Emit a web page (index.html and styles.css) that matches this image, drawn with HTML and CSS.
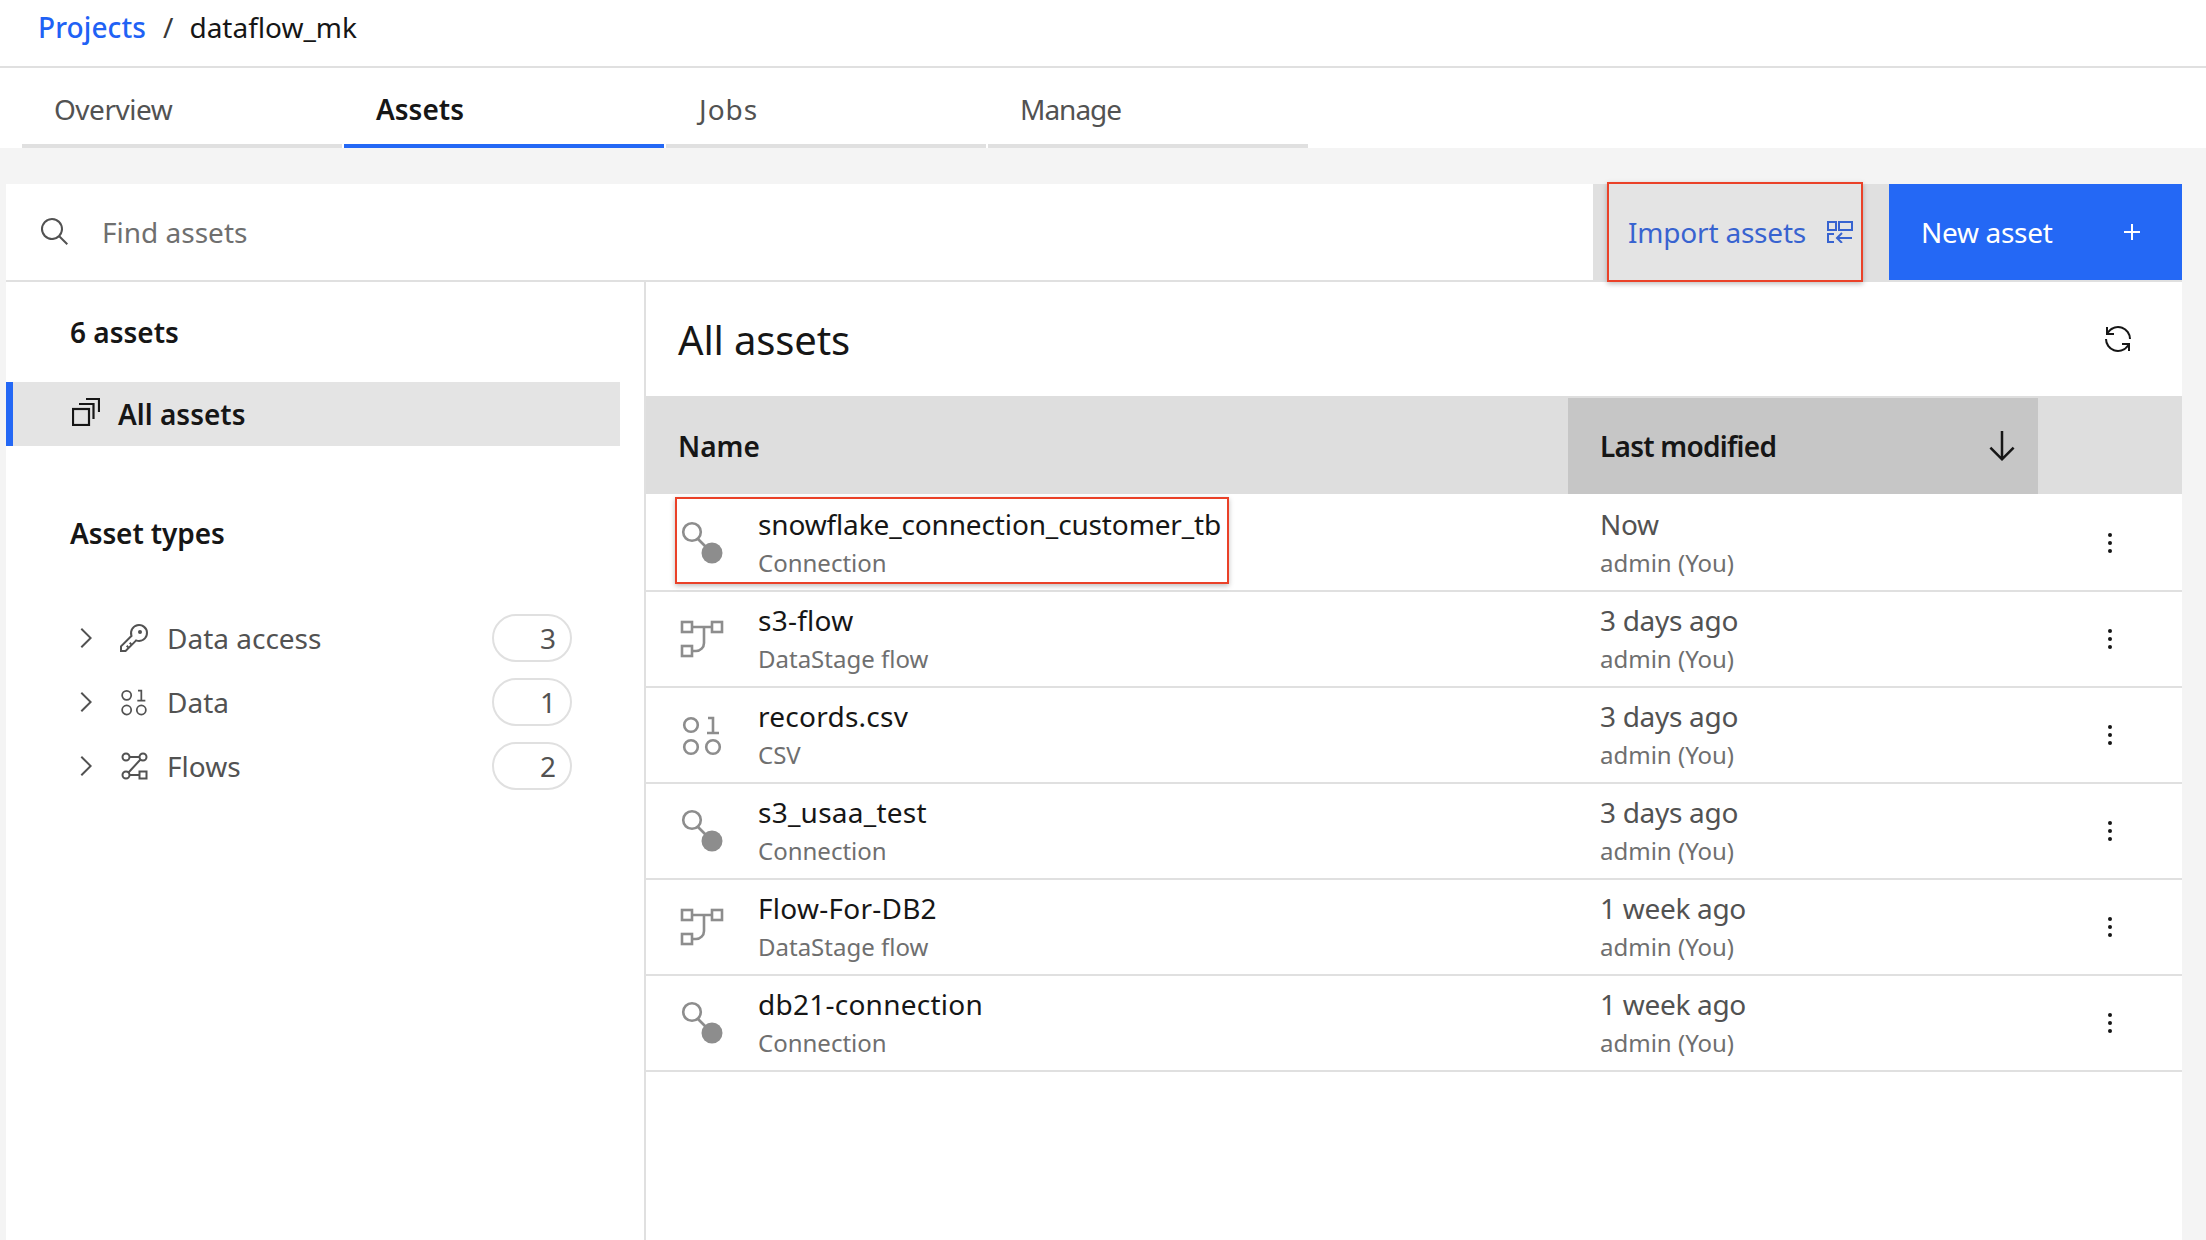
FILE: index.html
```html
<!DOCTYPE html>
<html lang="en">
<head>
<meta charset="utf-8">
<title>dataflow_mk</title>
<link rel="stylesheet" href="styles.css">
</head>
<body>
<svg class="sprite" aria-hidden="true">
  <symbol id="i-conn" viewBox="0 0 48 48">
    <circle cx="14" cy="13" r="8.8" fill="none" stroke="currentColor" stroke-width="2.6"/>
    <path d="M20 20l8 8" stroke="currentColor" stroke-width="2.6"/>
    <circle cx="34" cy="34" r="10.5" fill="currentColor"/>
  </symbol>
  <symbol id="i-flow" viewBox="0 0 48 48">
    <g fill="none" stroke="currentColor" stroke-width="2.6">
      <rect x="4" y="7" width="10" height="10"/>
      <rect x="34" y="7" width="10" height="10"/>
      <rect x="4" y="31" width="10" height="10"/>
      <path d="M14 12h20M26 12v16a8 8 0 0 1-8 8h-4"/>
    </g>
  </symbol>
  <symbol id="i-data" viewBox="0 0 48 48">
    <g fill="none" stroke="currentColor" stroke-width="2.6">
      <circle cx="13" cy="14" r="6.8"/>
      <circle cx="13" cy="36" r="6.8"/>
      <circle cx="35" cy="36" r="6.8"/>
      <path d="M29 22h12M35 21V7h-5"/>
    </g>
  </symbol>
  <symbol id="i-more" viewBox="0 0 32 32">
    <circle cx="16" cy="8" r="2"/><circle cx="16" cy="16" r="2"/><circle cx="16" cy="24" r="2"/>
  </symbol>
  <symbol id="i-chev" viewBox="0 0 32 32">
    <path d="M22 16L12 26l-1.4-1.4 8.6-8.6-8.6-8.6L12 6z"/>
  </symbol>
</svg>

<header class="crumbs">
  <a class="crumb-link">Projects</a>
  <span class="crumb-sep">/</span>
  <span class="crumb-current">dataflow_mk</span>
</header>

<nav class="tabs">
  <div class="tab tab-overview">Overview</div>
  <div class="tab tab-active">Assets</div>
  <div class="tab tab-jobs">Jobs</div>
  <div class="tab tab-manage">Manage</div>
</nav>

<main class="shell">
  <div class="toolbar">
    <div class="search">
      <svg class="icon-search" viewBox="0 0 32 32"><path d="M29 27.586l-7.552-7.552a11.018 11.018 0 1 0-1.414 1.414L27.586 29zM4 13a9 9 0 1 1 9 9 9.01 9.01 0 0 1-9-9z"/></svg>
      <span class="search-ph">Find assets</span>
    </div>
    <div class="btn btn-import">
      <span>Import assets</span>
      <svg class="icon-import" viewBox="0 0 26 22" fill="none" stroke="currentColor" stroke-width="2"><rect x="1" y="1" width="8" height="8"/><rect x="12" y="1" width="13" height="8"/><path d="M7 13H1v8h6M25 17H10M15 12l-5 5 5 5"/></svg>
    </div>
    <div class="btn btn-new">
      <span>New asset</span>
      <svg class="icon-add" viewBox="0 0 32 32"><path d="M17 15V8h-2v7H8v2h7v7h2v-7h7v-2z"/></svg>
    </div>
  </div>

  <div class="body">
    <aside class="side">
      <div class="side-count">6 assets</div>
      <div class="side-all">
        <svg class="icon-all" viewBox="0 0 28 28" fill="none" stroke="currentColor" stroke-width="2.2"><rect x="1" y="11" width="16" height="16"/><path d="M7 6h14.500v15M14 1h13v13"/></svg>
        <span>All assets</span>
      </div>
      <div class="side-head">Asset types</div>
      <ul class="types">
        <li class="type">
          <svg class="chev"><use href="#i-chev"/></svg>
          <svg class="type-icon" viewBox="0 0 32 32"><path d="M21,2a8.9977,8.9977,0,0,0-8.6119,11.6118L2,24v6H8L18.3881,19.6118A9,9,0,1,0,21,2Zm0,16a7.0125,7.0125,0,0,1-2.0322-.3022L17.821,17.35l-.8472.8472-3.1811,3.1812L12.4141,20,11,21.4141l1.3787,1.3786-1.5859,1.586L9.4141,23,8,24.4141l1.3787,1.3786L7.1716,28H4V24.8284l9.8023-9.8023.8472-.8474-.3473-1.1467A7,7,0,1,1,21,18Z"/><circle cx="22" cy="10" r="2"/></svg>
          <span class="type-label">Data access</span>
          <span class="pill">3</span>
        </li>
        <li class="type">
          <svg class="chev"><use href="#i-chev"/></svg>
          <svg class="type-icon type-line"><use href="#i-data"/></svg>
          <span class="type-label">Data</span>
          <span class="pill">1</span>
        </li>
        <li class="type">
          <svg class="chev"><use href="#i-chev"/></svg>
          <svg class="type-icon type-line" viewBox="0 0 32 32" stroke="currentColor" stroke-width="2"><circle cx="8" cy="7" r="3.500"/><circle cx="25" cy="7" r="3.500"/><circle cx="8" cy="25" r="3.500"/><rect x="21.500" y="21.500" width="7" height="7"/><path d="M11.500 7h10M11.500 25h10M22.500 9.500L10.500 22.500"/></svg>
          <span class="type-label">Flows</span>
          <span class="pill">2</span>
        </li>
      </ul>
    </aside>

    <section class="panel">
      <div class="panel-head">
        <h1 class="panel-title">All assets</h1>
        <svg class="icon-renew" viewBox="0 0 32 32"><path d="M12 10H6.780A11 11 0 0 1 27 16h2A13 13 0 0 0 6 7.680V4H4v8h8zm8 12h5.220A11 11 0 0 1 5 16H3a13 13 0 0 0 23 8.320V28h2v-8h-8z"/></svg>
      </div>
      <div class="thead">
        <div class="th th-name">Name</div>
        <div class="th th-sort">
          <span class="th-sort-label">Last modified</span>
          <svg class="icon-arrow" viewBox="0 0 32 32"><path d="M24.590 16.590L17 24.170V4h-2v20.170l-7.590-7.580L6 18l10 10 10-10-1.410-1.410z"/></svg>
        </div>
        <div class="th"></div>
      </div>

      <div class="row">
        <div class="cell-name"><svg class="asset-icon"><use href="#i-conn"/></svg><div><div class="title title-long">snowflake_connection_customer_tb</div><div class="sub">Connection</div></div></div>
        <div><div class="when">Now</div><div class="sub">admin (You)</div></div>
        <svg class="more"><use href="#i-more"/></svg>
      </div>
      <div class="row">
        <div class="cell-name"><svg class="asset-icon"><use href="#i-flow"/></svg><div><div class="title">s3-flow</div><div class="sub">DataStage flow</div></div></div>
        <div><div class="when">3 days ago</div><div class="sub">admin (You)</div></div>
        <svg class="more"><use href="#i-more"/></svg>
      </div>
      <div class="row">
        <div class="cell-name"><svg class="asset-icon"><use href="#i-data"/></svg><div><div class="title">records.csv</div><div class="sub">CSV</div></div></div>
        <div><div class="when">3 days ago</div><div class="sub">admin (You)</div></div>
        <svg class="more"><use href="#i-more"/></svg>
      </div>
      <div class="row">
        <div class="cell-name"><svg class="asset-icon"><use href="#i-conn"/></svg><div><div class="title">s3_usaa_test</div><div class="sub">Connection</div></div></div>
        <div><div class="when">3 days ago</div><div class="sub">admin (You)</div></div>
        <svg class="more"><use href="#i-more"/></svg>
      </div>
      <div class="row">
        <div class="cell-name"><svg class="asset-icon"><use href="#i-flow"/></svg><div><div class="title">Flow-For-DB2</div><div class="sub">DataStage flow</div></div></div>
        <div><div class="when">1 week ago</div><div class="sub">admin (You)</div></div>
        <svg class="more"><use href="#i-more"/></svg>
      </div>
      <div class="row">
        <div class="cell-name"><svg class="asset-icon"><use href="#i-conn"/></svg><div><div class="title">db21-connection</div><div class="sub">Connection</div></div></div>
        <div><div class="when">1 week ago</div><div class="sub">admin (You)</div></div>
        <svg class="more"><use href="#i-more"/></svg>
      </div>
    </section>
  </div>
</main>

<div class="mark mark-import"></div>
<div class="mark mark-row"></div>
</body>
</html>
```

FILE: styles.css
```css
* { box-sizing: border-box; }
html, body { margin: 0; padding: 0; }
body {
  position: relative;
  width: 2206px;
  height: 1240px;
  overflow: hidden;
  background: #f4f4f4;
  color: #161616;
  font-family: "Noto Sans", "Open Sans", sans-serif;
  font-size: 28px;
}
.sprite { display: none; }

.crumbs {
  height: 68px;
  background: #fff;
  border-bottom: 2px solid #e0e0e0;
  padding: 0 0 12px 38px;
  display: flex;
  align-items: center;
  line-height: 38px;
}
.crumb-link { color: #1f62f5; font-weight: 500; letter-spacing: 0.1px; }
.crumb-sep { margin: 0 16px 0 17px; color: #393939; }

.tabs {
  height: 80px;
  background: #fff;
  padding-left: 22px;
  display: flex;
  gap: 2px;
}
.tab {
  width: 320px;
  border-bottom: 4px solid #e0e0e0;
  padding: 22px 0 0 32px;
  line-height: 38px;
  color: #525252;
}
.tab-overview { letter-spacing: -0.5px; }
.tab-jobs { letter-spacing: 1px; padding-left: 33px; }
.tab-manage { letter-spacing: -1px; }
.tab-active {
  border-bottom-color: #2468f5;
  color: #161616;
  font-weight: 600;
}

.shell {
  margin: 36px 24px 0 6px;
  background: #fff;
  height: 1056px;
}

.toolbar {
  display: flex;
  height: 98px;
  border-bottom: 2px solid #e0e0e0;
}
.search {
  width: 1587px;
  display: flex;
  align-items: center;
  padding-left: 33px;
}
.icon-search { width: 32px; height: 32px; fill: #525252; }
.search-ph { margin-left: 31px; color: #6f6f6f; }
.btn {
  height: 96px;
  display: flex;
  align-items: center;
}
.btn-import {
  width: 296px;
  padding: 0 0 0 35px;
  background: #e0e0e0;
  color: #1448c8;
  letter-spacing: -0.2px;
}
.icon-import { width: 26px; height: 22px; margin-left: 21px; }
.btn-new {
  width: 293px;
  padding-left: 32px;
  background: #2468f5;
  color: #fff;
  letter-spacing: -0.3px;
}
.icon-add { width: 32px; height: 32px; fill: #fff; margin-left: 63px; }

.body { display: flex; height: 958px; }
.side {
  width: 640px;
  border-right: 2px solid #e0e0e0;
}
.side-count {
  margin: 31px 0 0 64px;
  height: 38px;
  line-height: 38px;
  font-weight: 600;
}
.side-all {
  margin-top: 31px;
  width: 614px;
  height: 64px;
  background: #e4e4e4;
  border-left: 7px solid #2468f5;
  padding-left: 59px;
  display: flex;
  align-items: center;
  font-weight: 600;
}
.icon-all { width: 28px; height: 28px; margin: -4px 18px 0 0; }
.side-head {
  margin: 68px 0 0 64px;
  height: 38px;
  line-height: 38px;
  font-weight: 600;
  letter-spacing: -0.1px;
}
.types {
  list-style: none;
  margin: 54px 0 0;
  padding: 0;
}
.type {
  height: 64px;
  display: flex;
  align-items: center;
  padding-left: 64px;
  color: #525252;
}
.chev { width: 32px; height: 32px; fill: #525252; }
.type-icon { width: 32px; height: 32px; margin-left: 16px; fill: #525252; }
.type-line { fill: none; }
.type-label { margin-left: 17px; flex: 1; }
.pill {
  width: 80px;
  height: 48px;
  margin-right: 72px;
  border: 2px solid #e0e0e0;
  border-radius: 24px;
  padding-right: 14px;
  text-align: right;
  line-height: 44px;
}

.panel { flex: 1; }
.panel-head {
  height: 114px;
  padding: 0 48px 0 32px;
  display: flex;
  align-items: center;
  justify-content: space-between;
}
.panel-title { margin: 2px 0 0; font-size: 40px; font-weight: 400; line-height: 56px; letter-spacing: -0.15px; }
.icon-renew { width: 32px; height: 32px; fill: #161616; }

.thead {
  display: grid;
  grid-template-columns: 922px 470px 1fr;
  height: 98px;
  margin-bottom: 2px;
  background: #dedede;
}
.th { font-weight: 600; display: flex; align-items: center; padding-top: 1px; }
.th-name { padding-left: 32px; }
.th-sort {
  margin-top: 2px;
  padding: 0 16px 0 32px;
  background: #c6c6c6;
  justify-content: space-between;
}
.th-sort-label { letter-spacing: -0.75px; }
.icon-arrow { width: 40px; height: 40px; fill: #161616; }

.row {
  display: grid;
  grid-template-columns: 922px 470px 1fr;
  height: 96px;
  padding-top: 2px;
  align-items: center;
  border-bottom: 2px solid #e0e0e0;
}
.row > div:nth-child(2) { padding-left: 32px; }
.cell-name { display: flex; align-items: center; padding-left: 32px; }
.asset-icon { width: 48px; height: 48px; margin: -2px 32px 0 0; color: #8d8d8d; flex: none; }
.title { line-height: 38px; letter-spacing: 0.25px; }
.title-long { letter-spacing: -0.14px; }
.when { line-height: 38px; color: #525252; letter-spacing: -0.3px; }
.sub { line-height: 40px; font-size: 24px; color: #6f6f6f; }
.more { width: 32px; height: 32px; margin-top: -2px; justify-self: center; fill: #161616; }

.mark {
  position: absolute;
  border: 2px solid #ea4128;
  box-shadow: 0 2px 5px rgba(0, 0, 0, 0.25);
}
.mark-import {
  left: 1607px;
  top: 182px;
  width: 256px;
  height: 100px;
  background: rgba(255, 255, 255, 0.15);
}
.mark-row {
  left: 675px;
  top: 497px;
  width: 554px;
  height: 87px;
}
```
